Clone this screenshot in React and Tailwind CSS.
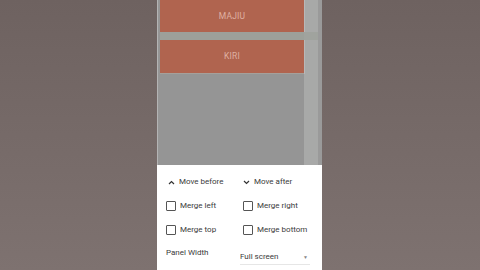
import React from "react";

function Box() {
  return <div className="w-[10px] h-[10px] border border-[#555] rounded-[1px] shrink-0" />;
}

export default function App() {
  return (
    <div className="w-[480px] h-[270px] flex bg-gradient-to-b from-[#6e6260] to-[#7e7270] overflow-hidden" style={{ fontFamily: "Roboto, 'Noto Sans', sans-serif" }}>
      <div className="w-[157px] shrink-0" />
      <div className="w-[165px] h-full flex flex-col shrink-0">
        <div className="h-[165px] flex bg-[#959595] border-l border-[#b4b4b4]">
          <div className="w-[146px] pl-[2px] flex flex-col">
            <div className="h-[32px] bg-[#b0644f] flex items-center justify-center text-[8.5px] text-[#dfb0a2] tracking-wide">MAJIU</div>
            <div className="h-[8px] bg-[#9da09a]" />
            <div className="h-[34px] bg-[#b0644f] flex items-center justify-center text-[8.5px] text-[#dfb0a2] tracking-wide border-b border-[#a5a09b]">KIRI</div>
          </div>
          <div className="w-[14px] bg-[#a8a9a8] flex flex-col">
            <div className="h-[32px] border-l border-[#b8b8b8]" />
            <div className="h-[8px] bg-[#a0a39e]" />
            <div className="h-[34px] border-l border-[#b8b8b8]" />
          </div>
          <div className="flex-1 bg-[#9a9a9a]" />
        </div>
        <div className="flex-1 bg-white flex flex-col text-[8px] text-[#3a3a3a] pl-[9px] pr-[12px]">
          <div className="h-[11px]" />
          <div className="flex h-[12px] items-center">
            <div className="w-[77px] flex items-center gap-[4px] pl-[2px]">
              <svg width="7" height="5" viewBox="0 0 7 5"><path d="M1 4 L3.5 1.5 L6 4" stroke="#333" strokeWidth="1.2" fill="none" /></svg>
              <span>Move before</span>
            </div>
            <div className="flex items-center gap-[4px]">
              <svg width="7" height="5" viewBox="0 0 7 5"><path d="M1 1 L3.5 3.5 L6 1" stroke="#333" strokeWidth="1.2" fill="none" /></svg>
              <span>Move after</span>
            </div>
          </div>
          <div className="h-[12px]" />
          <div className="flex h-[12px] items-center">
            <div className="w-[77px] flex items-center gap-[4px]"><Box /><span>Merge left</span></div>
            <div className="flex items-center gap-[4px]"><Box /><span>Merge right</span></div>
          </div>
          <div className="h-[12px]" />
          <div className="flex h-[12px] items-center">
            <div className="w-[77px] flex items-center gap-[4px]"><Box /><span>Merge top</span></div>
            <div className="flex items-center gap-[4px]"><Box /><span>Merge bottom</span></div>
          </div>
          <div className="h-[11px]" />
          <div className="flex">
            <div className="w-[74px] h-[12px] flex items-center">Panel Width</div>
            <div className="flex-1 h-[15px] mt-[3px] flex items-end justify-between border-b border-[#e6e6e6] pb-[1px]">
              <span>Full screen</span>
              <span className="text-[5px] text-[#888] mb-[2px] mr-[2px]">▼</span>
            </div>
          </div>
        </div>
      </div>
    </div>
  );
}
